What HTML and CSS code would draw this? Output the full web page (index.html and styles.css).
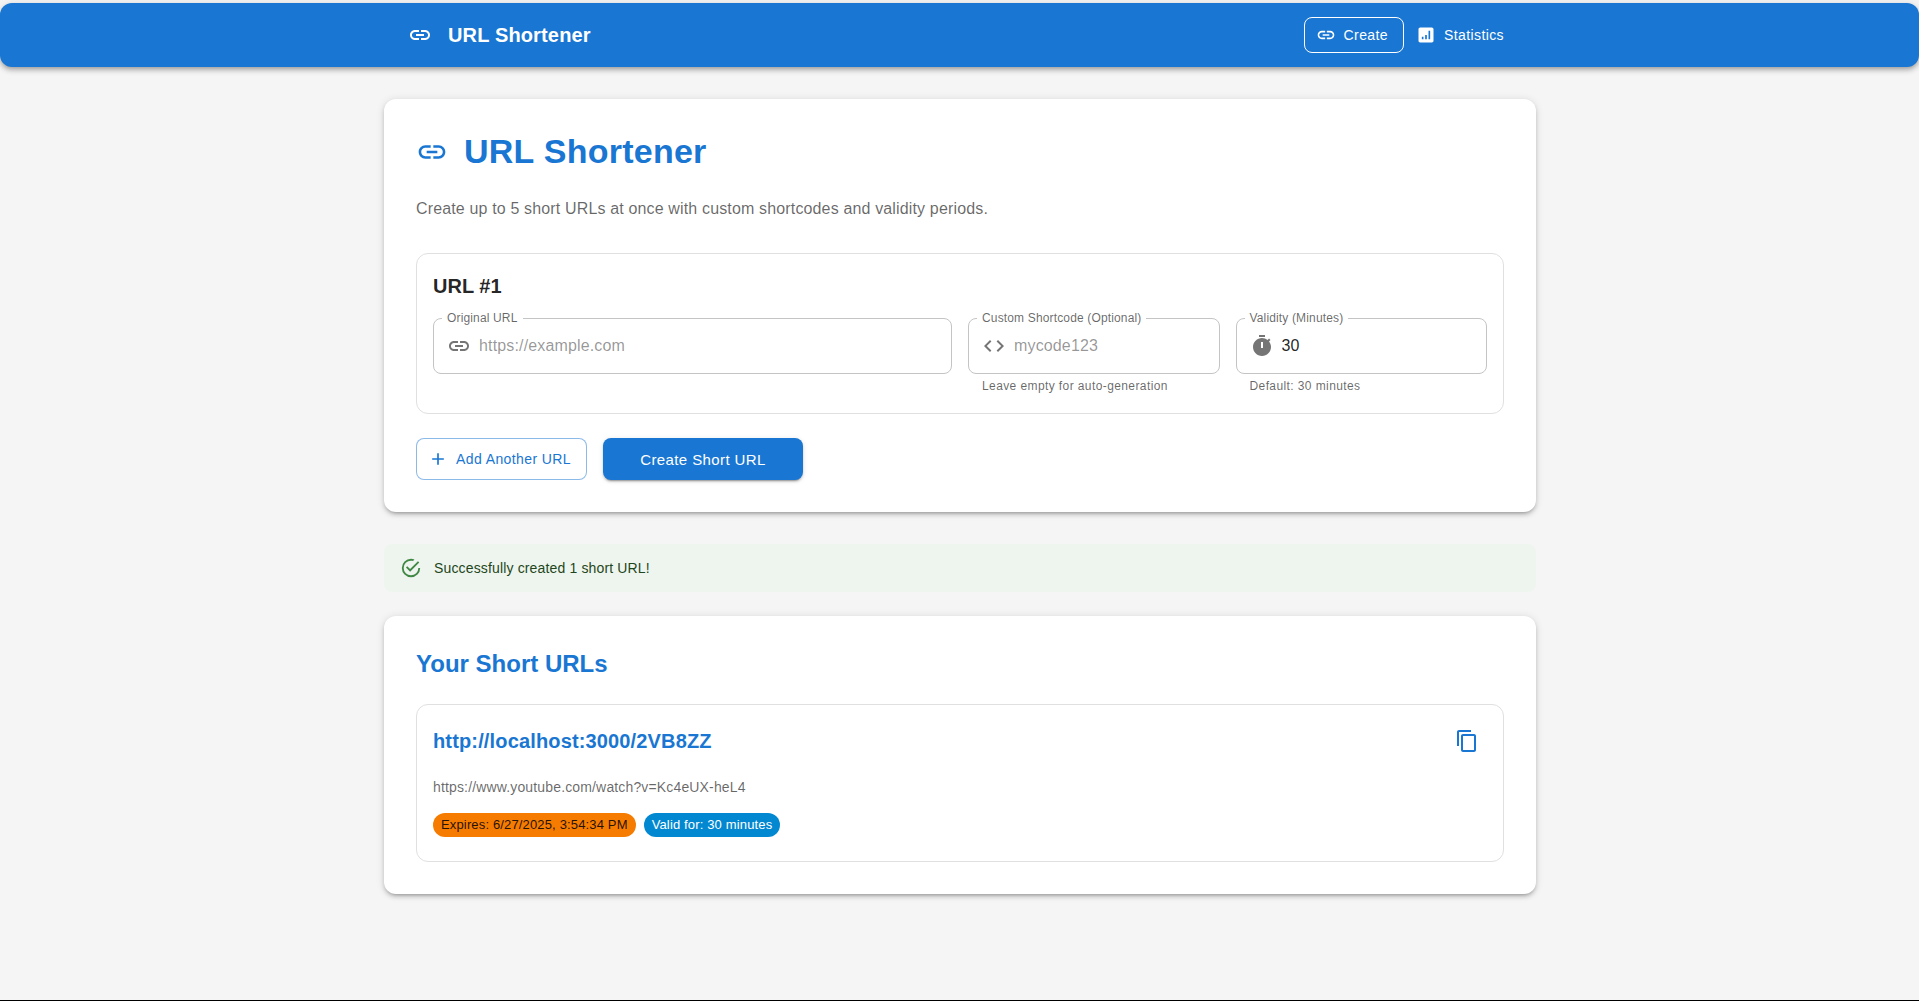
FILE: index.html
```html
<!DOCTYPE html>
<html lang="en">
<head>
  <meta charset="UTF-8">
  <title>URL Shortener</title>
  <link rel="stylesheet" href="styles.css">
</head>
<body>
  <header class="appbar">
    <div class="appbar-inner">
      <svg class="icon appbar-logo" viewBox="0 0 24 24"><path d="M3.9 12c0-1.71 1.39-3.1 3.1-3.1h4V7H7c-2.76 0-5 2.24-5 5s2.24 5 5 5h4v-1.9H7c-1.71 0-3.1-1.39-3.1-3.1zM8 13h8v-2H8v2zm9-6h-4v1.9h4c1.71 0 3.1 1.39 3.1 3.1s-1.39 3.1-3.1 3.1h-4V17h4c2.76 0 5-2.24 5-5s-2.24-5-5-5z"/></svg>
      <div class="appbar-title">URL Shortener</div>
      <nav class="nav">
        <a class="nav-btn active" href="#">
          <svg class="icon nav-icon" viewBox="0 0 24 24"><path d="M3.9 12c0-1.71 1.39-3.1 3.1-3.1h4V7H7c-2.76 0-5 2.24-5 5s2.24 5 5 5h4v-1.9H7c-1.71 0-3.1-1.39-3.1-3.1zM8 13h8v-2H8v2zm9-6h-4v1.9h4c1.71 0 3.1 1.39 3.1 3.1s-1.39 3.1-3.1 3.1h-4V17h4c2.76 0 5-2.24 5-5s-2.24-5-5-5z"/></svg>
          Create
        </a>
        <a class="nav-btn" href="#">
          <svg class="icon nav-icon" viewBox="0 0 24 24"><path d="M19 3H5c-1.1 0-2 .9-2 2v14c0 1.1.9 2 2 2h14c1.1 0 2-.9 2-2V5c0-1.1-.9-2-2-2zM9 17H7v-3h2v3zm4 0h-2v-5h2v5zm4 0h-2V7h2v10z"/></svg>
          Statistics
        </a>
      </nav>
    </div>
  </header>

  <main class="container">
    <section class="card">
      <div class="page-head">
        <svg class="icon page-icon" viewBox="0 0 24 24"><path d="M3.9 12c0-1.71 1.39-3.1 3.1-3.1h4V7H7c-2.76 0-5 2.24-5 5s2.24 5 5 5h4v-1.9H7c-1.71 0-3.1-1.39-3.1-3.1zM8 13h8v-2H8v2zm9-6h-4v1.9h4c1.71 0 3.1 1.39 3.1 3.1s-1.39 3.1-3.1 3.1h-4V17h4c2.76 0 5-2.24 5-5s-2.24-5-5-5z"/></svg>
        <h1>URL Shortener</h1>
      </div>
      <p class="intro">Create up to 5 short URLs at once with custom shortcodes and validity periods.</p>

      <div class="box">
        <h2 class="box-title">URL #1</h2>
        <div class="fields">
          <div class="field field-wide">
            <fieldset class="outline">
              <legend>Original URL</legend>
              <svg class="icon field-icon" viewBox="0 0 24 24"><path d="M3.9 12c0-1.71 1.39-3.1 3.1-3.1h4V7H7c-2.76 0-5 2.24-5 5s2.24 5 5 5h4v-1.9H7c-1.71 0-3.1-1.39-3.1-3.1zM8 13h8v-2H8v2zm9-6h-4v1.9h4c1.71 0 3.1 1.39 3.1 3.1s-1.39 3.1-3.1 3.1h-4V17h4c2.76 0 5-2.24 5-5s-2.24-5-5-5z"/></svg>
              <input type="text" placeholder="https://example.com">
            </fieldset>
          </div>
          <div class="field">
            <fieldset class="outline">
              <legend>Custom Shortcode (Optional)</legend>
              <svg class="icon field-icon" viewBox="0 0 24 24"><path d="M9.4 16.6 4.8 12l4.6-4.6L8 6l-6 6 6 6 1.4-1.4zm5.2 0 4.6-4.6-4.6-4.6L16 6l6 6-6 6-1.4-1.4z"/></svg>
              <input type="text" placeholder="mycode123">
            </fieldset>
            <p class="helper">Leave empty for auto-generation</p>
          </div>
          <div class="field">
            <fieldset class="outline">
              <legend>Validity (Minutes)</legend>
              <svg class="icon field-icon" viewBox="0 0 24 24"><path d="M9 1h6v2H9zm10.03 6.39 1.42-1.42c-.43-.51-.9-.99-1.41-1.41l-1.42 1.42C16.07 4.74 14.12 4 12 4c-4.97 0-9 4.03-9 9s4.02 9 9 9 9-4.03 9-9c0-2.12-.74-4.07-1.97-5.61zM13 14h-2V8h2v6z"/></svg>
              <input type="text" value="30">
            </fieldset>
            <p class="helper">Default: 30 minutes</p>
          </div>
        </div>
      </div>

      <div class="actions">
        <button class="btn btn-outline">
          <svg class="icon btn-icon" viewBox="0 0 24 24"><path d="M19 13h-6v6h-2v-6H5v-2h6V5h2v6h6v2z"/></svg>
          Add Another URL
        </button>
        <button class="btn btn-primary">Create Short URL</button>
      </div>
    </section>

    <div class="alert">
      <svg class="icon alert-icon" viewBox="0 0 24 24"><path d="M20 12a8 8 0 0 1-8 8 8 8 0 0 1-8-8 8 8 0 0 1 8-8c.76 0 1.5.11 2.2.31l1.57-1.57A9.822 9.822 0 0 0 12 2 10 10 0 0 0 2 12a10 10 0 0 0 10 10 10 10 0 0 0 10-10M7.91 10.08 6.5 11.5 11 16 21 6l-1.41-1.42L11 13.17l-3.09-3.09z"/></svg>
      Successfully created 1 short URL!
    </div>

    <section class="card">
      <h2 class="results-title">Your Short URLs</h2>
      <div class="box">
        <div class="result-top">
          <a class="short-link" href="#">http://localhost:3000/2VB8ZZ</a>
          <button class="icon-btn">
            <svg class="icon copy-icon" viewBox="0 0 24 24"><path d="M16 1H4c-1.1 0-2 .9-2 2v14h2V3h12V1zm3 4H8c-1.1 0-2 .9-2 2v14c0 1.1.9 2 2 2h11c1.1 0 2-.9 2-2V7c0-1.1-.9-2-2-2zm0 16H8V7h11v14z"/></svg>
          </button>
        </div>
        <p class="original">https://www.youtube.com/watch?v=Kc4eUX-heL4</p>
        <div class="chips">
          <span class="chip chip-warning">Expires: 6/27/2025, 3:54:34 PM</span>
          <span class="chip chip-info">Valid for: 30 minutes</span>
        </div>
      </div>
    </section>
  </main>
</body>
</html>
```

FILE: styles.css
```css
* {
  box-sizing: border-box;
}
html, body {
  height: 1001px;
  overflow: hidden;
}
body {
  margin: 0;
  padding-top: 3px;
  font-family: "Liberation Sans", Arial, sans-serif;
  background-color: #f5f5f5;
  border-bottom: 1px solid #000;
  color: rgba(0,0,0,0.87);
}
.icon {
  display: block;
  flex: none;
  fill: currentColor;
}

.appbar {
  height: 64px;
  background: #1976d2;
  color: #fff;
  border-radius: 12px;
  box-shadow: 0 2px 4px -1px rgba(0,0,0,0.2), 0 4px 5px 0 rgba(0,0,0,0.14), 0 1px 10px 0 rgba(0,0,0,0.12);
}
.appbar-inner {
  width: 1152px;
  height: 100%;
  margin: 0 0 0 384px;
  padding: 0 24px;
  display: flex;
  align-items: center;
}
.appbar-logo {
  width: 24px;
  height: 24px;
  margin-right: 16px;
}
.appbar-title {
  flex: 1;
  font-size: 20px;
  font-weight: 700;
  letter-spacing: 0.15px;
}
.nav {
  display: flex;
  gap: 8px;
}
.nav-btn {
  display: flex;
  align-items: center;
  height: 36px;
  padding: 0 7px;
  color: #fff;
  font-size: 14px;
  letter-spacing: 0.4px;
  text-decoration: none;
  border: 1px solid transparent;
  border-radius: 8px;
}
.nav-btn.active {
  border-color: #fff;
  padding: 0 15px;
}
.nav-icon {
  width: 20px;
  height: 20px;
  margin-right: 8px;
  margin-left: -4px;
}

.container {
  width: 1152px;
  margin: 32px 0 0 384px;
}
.card {
  background: #fff;
  padding: 32px;
  border-radius: 12px;
  box-shadow: 0 3px 3px -2px rgba(0,0,0,0.2), 0 3px 4px 0 rgba(0,0,0,0.14), 0 1px 8px 0 rgba(0,0,0,0.12);
}
.page-head {
  display: flex;
  align-items: center;
  height: 42px;
  margin-bottom: 24px;
}
.page-icon {
  width: 32px;
  height: 32px;
  margin-right: 16px;
  color: #1976d2;
}
h1 {
  margin: 0 0 2px;
  font-size: 34px;
  line-height: 40px;
  font-weight: 700;
  letter-spacing: 0.25px;
  color: #1976d2;
}
.intro {
  margin: 0 0 32px;
  font-size: 16px;
  line-height: 24px;
  letter-spacing: 0.15px;
  color: rgba(0,0,0,0.6);
}

.box {
  border: 1px solid #e0e0e0;
  border-radius: 12px;
  padding: 16px;
}
.box-title {
  margin: 0 0 16px;
  font-size: 20px;
  line-height: 32px;
  font-weight: 700;
}
.fields {
  display: grid;
  grid-template-columns: repeat(12, 1fr);
  gap: 16px;
}
.field {
  grid-column: span 3;
}
.field-wide {
  grid-column: span 6;
}
.outline {
  display: flex;
  align-items: center;
  height: 60px;
  margin: -4px 0 0;
  padding: 0 14px 0 13px;
  border: 1px solid #c4c4c4;
  border-radius: 8px;
  min-width: 0;
}
.outline legend {
  margin-left: -5px;
  padding: 0 5px;
  font-size: 12px;
  line-height: 9px;
  letter-spacing: 0.15px;
  color: rgba(0,0,0,0.6);
}
.field-icon {
  width: 24px;
  height: 24px;
  margin: -4px 8px 0 0;
  color: #757575;
}
.outline input {
  flex: 1;
  min-width: 0;
  border: 0;
  outline: 0;
  padding: 0;
  margin-top: -4px;
  font: 16px "Liberation Sans", Arial, sans-serif;
  letter-spacing: 0.15px;
  color: rgba(0,0,0,0.87);
  background: transparent;
}
.outline input::placeholder {
  color: rgba(0,0,0,0.42);
  opacity: 1;
}
.helper {
  margin: 2px 14px 1px;
  font-size: 12px;
  line-height: 20px;
  letter-spacing: 0.4px;
  color: rgba(0,0,0,0.6);
}

.actions {
  display: flex;
  gap: 16px;
  margin-top: 24px;
}
.btn {
  display: flex;
  align-items: center;
  justify-content: center;
  height: 42px;
  font: 15px "Liberation Sans", Arial, sans-serif;
  border-radius: 8px;
  cursor: pointer;
}
.btn-outline {
  width: 171px;
  color: #1976d2;
  background: #fff;
  border: 1px solid rgba(25,118,210,0.5);
  font-size: 14px;
  letter-spacing: 0.4px;
}
.btn-icon {
  width: 20px;
  height: 20px;
  margin-right: 8px;
  margin-left: -4px;
}
.btn-primary {
  width: 200px;
  color: #fff;
  background: #1976d2;
  border: none;
  letter-spacing: 0.4px;
  box-shadow: 0 3px 1px -2px rgba(0,0,0,0.2), 0 2px 2px 0 rgba(0,0,0,0.14), 0 1px 5px 0 rgba(0,0,0,0.12);
}

.alert {
  display: flex;
  align-items: center;
  height: 48px;
  margin: 32px 0 24px;
  padding: 0 16px;
  background: #eef5ee;
  border-radius: 8px;
  font-size: 14px;
  letter-spacing: 0.15px;
  color: #1e4620;
}
.alert-icon {
  width: 22px;
  height: 22px;
  margin-right: 12px;
  color: #2e7d32;
  opacity: 0.9;
}

.results-title {
  margin: 0 0 24px;
  font-size: 24px;
  line-height: 32px;
  font-weight: 700;
  color: #1976d2;
}
.result-top {
  display: flex;
  justify-content: space-between;
  align-items: center;
  height: 40px;
  margin-bottom: 16px;
}
.short-link {
  font-size: 20px;
  font-weight: 700;
  letter-spacing: 0.15px;
  color: #1976d2;
  text-decoration: none;
}
.icon-btn {
  width: 40px;
  height: 40px;
  padding: 8px;
  border: 0;
  background: transparent;
  color: #1976d2;
}
.copy-icon {
  width: 24px;
  height: 24px;
}
.original {
  margin: 0 0 16px;
  font-size: 14px;
  line-height: 20px;
  letter-spacing: 0.15px;
  color: rgba(0,0,0,0.6);
}
.chips {
  display: flex;
  gap: 8px;
  margin-bottom: 8px;
}
.chip {
  height: 24px;
  padding: 0 8px;
  border-radius: 12px;
  font-size: 13px;
  line-height: 24px;
  letter-spacing: 0.15px;
}
.chip-warning {
  background: #f57c00;
  color: rgba(0,0,0,0.87);
}
.chip-info {
  background: #0288d1;
  color: #fff;
}
```
